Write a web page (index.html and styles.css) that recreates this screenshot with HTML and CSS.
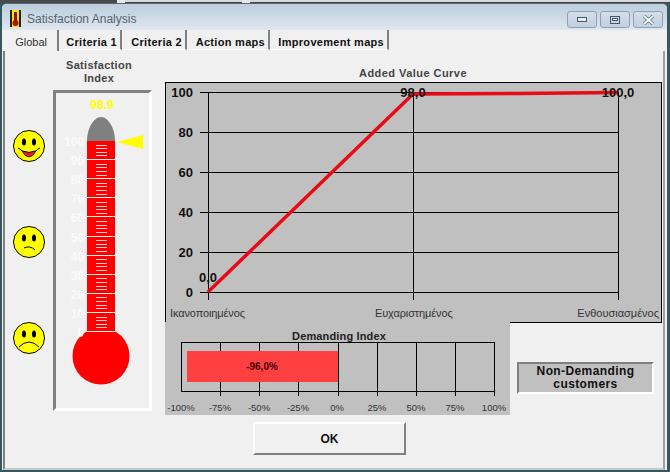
FILE: index.html
```html
<!DOCTYPE html>
<html>

<head>
    <title>Satisfaction Analysis</title>
    <meta charset="utf-8" />
    <link rel="stylesheet" href="styles.css">
</head>

<body>
    <div class="taskStrip">
        <span class="stripDark stripA"></span>
        <span class="stripGap"></span>
        <span class="stripDark stripB"></span>
        <span class="stripGap"></span>
        <span class="stripDark stripC"></span>
    </div>

    <div class="window">
        <div class="titleBar">
            <svg class="appIcon" width="11" height="17" viewBox="0 0 11 17">
                <rect width="11" height="17" fill="#f4e400" />
                <rect width="2" height="17" fill="#222" />
                <rect x="9" width="2" height="17" fill="#222" />
                <rect x="4" y="2" width="3" height="10" fill="#8c1414" />
                <circle cx="5.5" cy="13" r="3" fill="#b01010" />
            </svg>
            <span class="titleText">Satisfaction Analysis</span>
            <div class="captionButtons">
                <div class="captionBtn">
                    <svg width="12" height="7" viewBox="0 0 12 7">
                        <rect x="1.5" y="1.5" width="9" height="4" fill="#e8eef4" stroke="#46586a" />
                    </svg>
                </div>
                <div class="captionBtn">
                    <svg width="12" height="10" viewBox="0 0 12 10">
                        <rect x="1.5" y="1.5" width="9" height="7" fill="none" stroke="#46586a" />
                        <rect x="3.5" y="3.5" width="5" height="2" fill="#e8eef4" stroke="#46586a" />
                    </svg>
                </div>
                <div class="captionBtn">
                    <svg width="13" height="10" viewBox="0 0 13 10">
                        <path d="M2 1 L11 9 M11 1 L2 9" stroke="#5a6c7e" stroke-width="3.4" />
                        <path d="M2 1 L11 9 M11 1 L2 9" stroke="#fff" stroke-width="1.8" />
                    </svg>
                </div>
            </div>
        </div>

        <div class="tabs">
            <div class="tab tabActive">Global</div>
            <div class="tab tab1">Criteria 1</div>
            <div class="tab tab2">Criteria 2</div>
            <div class="tab tab3">Action maps</div>
            <div class="tab tab4">Improvement maps</div>
        </div>

        <div class="page">
            <div class="smileys">
                <svg width="32" height="32" viewBox="0 0 32 32">
                    <circle cx="16" cy="16" r="15.5" fill="#ffff00" stroke="#000" />
                    <ellipse cx="11" cy="12" rx="2" ry="3.5" fill="#000" />
                    <ellipse cx="21" cy="12" rx="2" ry="3.5" fill="#000" />
                    <path d="M5 18 Q8 19 9 21 Q16 24 23 21 Q24 19 27 18" fill="none" stroke="#000" />
                    <path d="M9 21 Q16 24 23 21 Q20 27 16 27 Q12 27 9 21 Z" fill="#e02020" stroke="#000" stroke-width="0.6" />
                </svg>
                <svg width="32" height="32" viewBox="0 0 32 32">
                    <circle cx="16" cy="16" r="15.5" fill="#ffff00" stroke="#000" />
                    <ellipse cx="11" cy="12" rx="2" ry="3.5" fill="#000" />
                    <ellipse cx="21" cy="12" rx="2" ry="3.5" fill="#000" />
                    <path d="M11 22 Q17 19 22 24" fill="none" stroke="#000" />
                </svg>
                <svg width="32" height="32" viewBox="0 0 32 32">
                    <circle cx="16" cy="16" r="15.5" fill="#ffff00" stroke="#000" />
                    <ellipse cx="11" cy="12" rx="2" ry="3.5" fill="#000" />
                    <ellipse cx="21" cy="12" rx="2" ry="3.5" fill="#000" />
                    <path d="M6 25 Q16 15 26 25" fill="none" stroke="#000" />
                </svg>
            </div>

            <div class="gaugeColumn">
                <div class="gaugeTitle">Satisfaction<br>Index</div>
                <div class="gaugeFrame">
                    <svg width="93" height="315" viewBox="56 93 93 315">
                        <text class="gaugeValue" x="102" y="109">98.9</text>
                        <path d="M87 141 C87 128 94 117 101 117 C108 117 115 128 115 141 Z" fill="#808080" />
                        <rect x="87" y="141" width="28" height="192" fill="#ff0000" />
                        <circle cx="101" cy="356" r="28.5" fill="#ff0000" />
                        <polygon points="117,142 143,135 143,149" fill="#ffff00" />
                        <g id="scale"></g>
                    </svg>
                </div>
            </div>

            <div class="mainColumn">
                <div class="chartTitle">Added Value Curve</div>
                <svg class="curveChart" width="498" height="241" viewBox="165 82 498 241">
                    <rect x="165.5" y="82.5" width="496" height="240" fill="#c0c0c0" stroke="#000" />
                    <g stroke="#000" fill="none">
                        <path d="M200 92.5H618.5 M200 132.5H618.5 M200 172.5H618.5 M200 212.5H618.5 M200 252.5H618.5 M200 292.5H618.5" />
                        <path d="M208.5 92V300 M413.5 92V300 M618.5 92V300" />
                    </g>
                    <polyline points="208,292 413,94 518,93.5 618,92.5" fill="none" stroke="#e80a14" stroke-width="3.5" />
                    <text class="axisNum" x="193" y="97">100</text>
                    <text class="axisNum" x="193" y="137">80</text>
                    <text class="axisNum" x="193" y="177">60</text>
                    <text class="axisNum" x="193" y="217">40</text>
                    <text class="axisNum" x="193" y="257">20</text>
                    <text class="axisNum" x="193" y="297">0</text>
                    <text class="pointNum" x="208" y="282">0,0</text>
                    <text class="pointNum" x="413" y="97">98,0</text>
                    <text class="pointNum" x="618" y="97">100,0</text>
                    <text class="curveLabel" x="170" y="317">Ικανοποιημένος</text>
                    <text class="curveLabel" x="375" y="317">Ευχαριστημένος</text>
                    <text class="curveLabel labelEnd" x="659" y="317">Ενθουσιασμένος</text>
                </svg>

                <div class="lowerRow">
                    <svg class="demandChart" width="345" height="93" viewBox="165 322 345 93">
                        <rect x="165" y="322" width="345" height="93" fill="#c0c0c0" />
                        <text class="demandTitle" x="339" y="340">Demanding Index</text>
                        <g stroke="#000" fill="none">
                            <rect x="181.5" y="342.5" width="313" height="49" />
                            <path d="M220.5 342V396 M259.5 342V396 M298.5 342V396 M338.5 342V396 M377.5 342V396 M416.5 342V396 M455.5 342V396 M494.5 342V396" />
                        </g>
                        <rect x="187" y="351" width="151" height="31" fill="#ff4040" />
                        <text class="barValue" x="262" y="370">-96,0%</text>
                        <text class="pct" x="181" y="411">-100%</text>
                        <text class="pct" x="220" y="411">-75%</text>
                        <text class="pct" x="259" y="411">-50%</text>
                        <text class="pct" x="298" y="411">-25%</text>
                        <text class="pct" x="337" y="411">0%</text>
                        <text class="pct" x="377" y="411">25%</text>
                        <text class="pct" x="416" y="411">50%</text>
                        <text class="pct" x="455" y="411">75%</text>
                        <text class="pct" x="494" y="411">100%</text>
                    </svg>
                    <div class="statusBox">Non-Demanding<br>customers</div>
                </div>

                <button class="okBtn" type="button">OK</button>
            </div>
        </div>
    </div>

    <script>
        // thermometer scale: numbers, segment lines and minor ticks
        const scale = document.getElementById('scale');
        const ns = 'http://www.w3.org/2000/svg';
        const step = 19.1;

        function addLine(x1, x2, y, color) {
            const line = document.createElementNS(ns, 'line');
            line.setAttribute('x1', x1);
            line.setAttribute('x2', x2);
            line.setAttribute('y1', y);
            line.setAttribute('y2', y);
            line.setAttribute('stroke', color);
            scale.appendChild(line);
        }

        for (let i = 0; i <= 10; i++) {
            const y = Math.round(141 + i * step) + 0.5;
            const label = document.createElementNS(ns, 'text');
            label.setAttribute('class', 'scaleNum');
            label.setAttribute('x', 84);
            label.setAttribute('y', y + 4);
            label.textContent = 100 - i * 10;
            scale.appendChild(label);
            if (i === 0) continue;
            addLine(87, 115, y - 1, '#f8f0f0');
            for (let j = 1; j <= 4; j++) {
                addLine(96, 107, Math.round(141 + (i - 1) * step + j * 3.6) + 0.5, '#ffd0d0');
            }
        }
    </script>
</body>

</html>
```

FILE: styles.css
```css
* {
    box-sizing: border-box;
}

body {
    margin: 0;
    width: 670px;
    height: 472px;
    overflow: hidden;
    background-color: #33595f;
    font-family: "Liberation Sans", Arial, sans-serif;
}

svg {
    display: block;
}

.taskStrip {
    display: flex;
    height: 3px;
    background-color: #e8e8e8;
}

.stripDark {
    background-color: #4a4a4a;
}

.stripA {
    width: 117px;
}

.stripB {
    width: 117px;
    background-color: #d8d8d8;
    border-bottom: 1px solid #444;
}

.stripC {
    flex: 1;
    background-color: #d8d8d8;
    border-bottom: 1px solid #444;
}

.stripGap {
    width: 8px;
}

.window {
    margin-left: 2px;
    width: 665px;
    height: 467px;
    border-top: 1px solid #5a6670;
    border-radius: 5px 5px 0 0;
    background-color: #f0f0f0;
    display: flex;
    flex-direction: column;
    overflow: hidden;
}

/* title bar */
.titleBar {
    height: 26px;
    flex: none;
    display: flex;
    align-items: center;
    padding-left: 8px;
    background: linear-gradient(#bccddd, #dfe7ef);
}

.appIcon {
    margin-top: 2px;
}

.titleText {
    margin-left: 6px;
    margin-top: 4px;
    font-size: 12px;
    color: #56646f;
}

.captionButtons {
    margin-left: auto;
    margin-right: 4px;
    margin-top: 5px;
    display: flex;
    gap: 3px;
}

.captionBtn {
    width: 30px;
    height: 17px;
    border: 1px solid #8d9fb2;
    border-radius: 3px;
    background: linear-gradient(#d3dee9, #c2d0de);
    display: flex;
    align-items: center;
    justify-content: center;
}

/* tabs */
.tabs {
    height: 21px;
    flex: none;
    display: flex;
    align-items: flex-start;
    padding-left: 4px;
    margin-left: 1px;
}

.tab {
    height: 20px;
    line-height: 24px;
    border-right: 2px solid #808080;
    border-bottom: 1px solid #fff;
    padding-right: 3px;
    font-size: 11px;
    font-weight: bold;
    letter-spacing: 0.3px;
    color: #111;
    text-align: right;
}

.tabActive {
    width: 52px;
    height: 21px;
    border-bottom: none;
    padding-right: 10px;
    font-size: 11px;
    font-weight: normal;
    letter-spacing: 0;
    line-height: 24px;
    color: #333;
}

.tab1 {
    width: 63px;
}

.tab2 {
    width: 65px;
}

.tab3 {
    width: 83px;
}

.tab4 {
    width: 119px;
}

/* main page */
.page {
    flex: 1;
    display: flex;
    margin-left: 1px;
    margin-right: 2px;
    border-left: 2px solid #808080;
    border-right: 2px solid #a0a0a0;
    border-bottom: 2px solid #c8c8c8;
}

.smileys {
    width: 48px;
    flex: none;
    padding: 79px 0 0 8px;
    display: flex;
    flex-direction: column;
    gap: 64px;
}

.gaugeColumn {
    width: 99px;
    flex: none;
}

.gaugeTitle {
    height: 39px;
    padding-top: 8px;
    padding-right: 7px;
    font-size: 11px;
    line-height: 13px;
    font-weight: bold;
    letter-spacing: 0.3px;
    color: #444;
    text-align: center;
}

.gaugeFrame {
    height: 321px;
    border: 3px solid;
    border-color: #808080 #fff #fff #808080;
}

.gaugeValue {
    font-size: 12px;
    font-weight: bold;
    fill: #ffff00;
    text-anchor: middle;
}

.scaleNum {
    font-size: 12px;
    font-weight: bold;
    fill: #fafafa;
    text-anchor: end;
}

.mainColumn {
    margin-left: 13px;
    flex: 1;
}

.chartTitle {
    height: 31px;
    padding-top: 16px;
    text-align: center;
    font-size: 11px;
    line-height: 13px;
    font-weight: bold;
    letter-spacing: 0.45px;
    color: #444;
    width: 496px;
}

.axisNum {
    font-size: 13px;
    font-weight: bold;
    fill: #111;
    text-anchor: end;
}

.pointNum {
    font-size: 13px;
    font-weight: bold;
    fill: #111;
    text-anchor: middle;
}

.curveLabel {
    font-size: 11px;
    letter-spacing: -0.12px;
    fill: #333;
}

.labelEnd {
    letter-spacing: 0;
    text-anchor: end;
}

.lowerRow {
    margin-top: -1px;
    display: flex;
}

.demandTitle {
    font-size: 11px;
    font-weight: bold;
    letter-spacing: 0.15px;
    fill: #222;
    text-anchor: middle;
}

.barValue {
    font-size: 10px;
    font-weight: bold;
    fill: #400;
    text-anchor: middle;
}

.pct {
    font-size: 9.5px;
    fill: #333;
    text-anchor: middle;
}

.statusBox {
    align-self: flex-start;
    margin: 40px 0 0 7px;
    padding-top: 1px;
    width: 137px;
    height: 32px;
    border: 2px solid;
    border-color: #808080 #fff #fff #808080;
    background-color: #c0c0c0;
    font-size: 12px;
    line-height: 13px;
    font-weight: bold;
    letter-spacing: 0.4px;
    color: #111;
    text-align: center;
}

.okBtn {
    display: block;
    margin: 7px 0 0 88px;
    width: 153px;
    height: 33px;
    border: 2px solid;
    border-color: #fff #808080 #808080 #fff;
    background-color: #f0f0f0;
    font-family: "Liberation Sans", Arial, sans-serif;
    font-size: 12px;
    font-weight: bold;
    color: #111;
}
```
